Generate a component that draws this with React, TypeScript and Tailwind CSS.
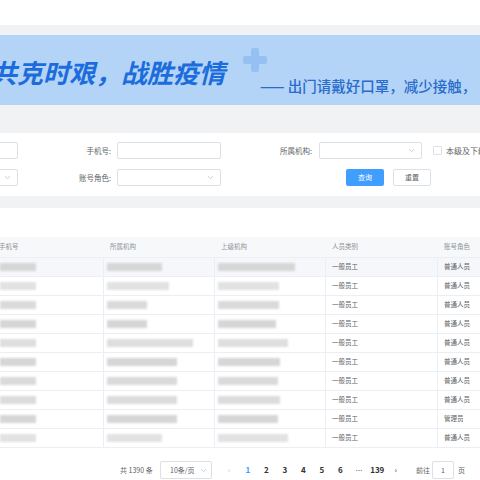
import React from "react";

const font = { fontFamily: '"Noto Sans CJK SC", "Noto Sans", sans-serif' };

const Chevron = ({ cls = "" }: { cls?: string }) => (
  <svg width="7" height="5" viewBox="0 0 7 5" className={cls}>
    <path d="M1 1.2 L3.5 3.6 L6 1.2" fill="none" stroke="#c0c4cc" strokeWidth="0.8" />
  </svg>
);

const rows = [
  { c1: 36, c2: 55, c3: 77, role: "普通人员", o: 1 },
  { c1: 36, c2: 62, c3: 61, role: "普通人员", o: 0.7 },
  { c1: 36, c2: 40, c3: 61, role: "普通人员", o: 0.9 },
  { c1: 36, c2: 40, c3: 58, role: "普通人员", o: 1 },
  { c1: 36, c2: 86, c3: 70, role: "普通人员", o: 0.8 },
  { c1: 36, c2: 70, c3: 62, role: "普通人员", o: 1 },
  { c1: 36, c2: 70, c3: 60, role: "普通人员", o: 0.9 },
  { c1: 36, c2: 70, c3: 62, role: "普通人员", o: 0.85 },
  { c1: 36, c2: 70, c3: 60, role: "管理员", o: 1 },
  { c1: 36, c2: 55, c3: 70, role: "普通人员", o: 0.7 },
];

const Bar = ({ w, o }: { w: number; o: number }) => (
  <div className="h-[8px] bg-[#d6d6d6] blur-[1.2px]" style={{ width: w, opacity: o }} />
);

export default function App() {
  return (
    <div className="w-[480px] h-[480px] overflow-hidden bg-white relative" style={font}>
      <div className="h-[25px] bg-white" />
      <div className="h-[10px] bg-[#f1f2f4]" />
      {/* banner */}
      <div className="h-[70px] bg-[#b3d4f7] relative flex items-start overflow-hidden">
        <div className="absolute left-[243px] top-[13px] w-[24px] h-[24px] opacity-80">
          <div className="absolute left-[8px] top-0 w-[8px] h-[24px] bg-[#8ebcf0] rounded-[2px]" />
          <div className="absolute left-0 top-[8px] w-[24px] h-[8px] bg-[#8ebcf0] rounded-[2px]" />
        </div>
        <div className="ml-[-9px] mt-[21px] h-[32px] leading-[32px] text-[26px] font-bold italic text-[#1c6ddb] whitespace-nowrap shrink-0">
          共克时艰，战胜疫情
        </div>
        <div className="ml-[35px] mt-[42px] h-[17px] leading-[17px] text-[14.5px] font-medium text-[#2a6ccb] whitespace-nowrap relative z-10 shrink-0">
          —— 出门请戴好口罩，减少接触，
        </div>
      </div>
      <div className="h-[28px] bg-[#f1f2f4]" />
      {/* filter panel */}
      <div className="h-[63px] bg-white pt-[9px] text-[7px] text-[#606266]">
        <div className="flex items-center h-[17px] ml-[-86px]">
          <div className="w-[104px] h-[17px] border border-[#dcdfe6] rounded-[2px] shrink-0" />
          <div className="w-[99px] text-right pr-[6px] whitespace-nowrap shrink-0 text-[7.5px]">手机号:</div>
          <div className="w-[104px] h-[17px] border border-[#dcdfe6] rounded-[2px] shrink-0" />
          <div className="w-[98px] text-right pr-[7px] whitespace-nowrap shrink-0 text-[7.5px]">所属机构:</div>
          <div className="w-[103px] h-[17px] border border-[#dcdfe6] rounded-[2px] flex items-center justify-end pr-[6px] shrink-0">
            <Chevron />
          </div>
          <div className="ml-[11px] w-[9px] h-[9px] border border-[#dcdfe6] rounded-[1px] shrink-0" />
          <div className="ml-[4px] whitespace-nowrap text-[8px] shrink-0">本级及下级</div>
        </div>
        <div className="flex items-center h-[17px] ml-[-86px] mt-[10px]">
          <div className="w-[104px] h-[17px] border border-[#dcdfe6] rounded-[2px] flex items-center justify-end pr-[6px] shrink-0">
            <Chevron />
          </div>
          <div className="w-[99px] text-right pr-[6px] whitespace-nowrap shrink-0 text-[7.5px]">账号角色:</div>
          <div className="w-[104px] h-[17px] border border-[#dcdfe6] rounded-[2px] flex items-center justify-end pr-[6px] shrink-0">
            <Chevron />
          </div>
          <div className="ml-[125px] w-[38px] h-[17px] rounded-[2px] bg-[#409eff] text-white flex items-center justify-center shrink-0">
            查询
          </div>
          <div className="ml-[9px] w-[38px] h-[17px] rounded-[2px] border border-[#dcdfe6] bg-white flex items-center justify-center shrink-0">
            重置
          </div>
        </div>
      </div>
      <div className="h-[12px] bg-[#f1f2f4]" />
      {/* table panel */}
      <div className="bg-white pt-[29px]">
        <div className="ml-[-7px] w-[560px] text-[6.5px]">
          <div className="flex h-[21px] items-center bg-[#f7f8fa] text-[#909399] border-b border-[#ebeef5]">
            <div className="w-[111px] pl-[6px]">手机号</div>
            <div className="w-[111px] pl-[6px]">所属机构</div>
            <div className="w-[111px] pl-[6px]">上级机构</div>
            <div className="w-[112px] pl-[6px]">人员类别</div>
            <div className="flex-1 pl-[6px]">账号角色</div>
          </div>
          {rows.map((r, i) => (
            <div
              key={i}
              className={`flex h-[19px] items-stretch text-[#606266] border-b border-[#ebeef5] ${i === 0 ? "bg-[#f5f7fa]" : "bg-white"}`}
            >
              <div className="w-[111px] pl-[7px] flex items-center border-r border-[#ebeef5]">
                <Bar w={r.c1} o={r.o} />
              </div>
              <div className="w-[111px] pl-[3px] flex items-center border-r border-[#ebeef5]">
                <Bar w={r.c2} o={r.o} />
              </div>
              <div className="w-[111px] pl-[3px] flex items-center border-r border-[#ebeef5]">
                <Bar w={r.c3} o={r.o} />
              </div>
              <div className="w-[112px] pl-[6px] flex items-center border-r border-[#ebeef5]">一般员工</div>
              <div className="flex-1 pl-[6px] flex items-center">{r.role}</div>
            </div>
          ))}
        </div>
        {/* pagination */}
        <div className="flex items-center h-[18px] mt-[13px] text-[#606266] text-[7px] whitespace-nowrap">
          <div className="ml-[120px] w-[40px] shrink-0">共 1390 条</div>
          <div className="w-[52px] h-[18px] border border-[#dcdfe6] rounded-[2px] flex items-center pl-[9px] pr-[4px] justify-between shrink-0">
            <span>10条/页</span>
            <Chevron />
          </div>
          <div className="ml-[8px] flex items-center text-[8px] font-semibold text-[#303133] shrink-0">
            <div className="w-[18.5px] text-center text-[#c0c4cc] font-normal">‹</div>
            <div className="w-[18.5px] text-center text-[#409eff]">1</div>
            <div className="w-[18.5px] text-center">2</div>
            <div className="w-[18.5px] text-center">3</div>
            <div className="w-[18.5px] text-center">4</div>
            <div className="w-[18.5px] text-center">5</div>
            <div className="w-[18.5px] text-center">6</div>
            <div className="w-[18.5px] text-center text-[7px] font-normal tracking-[-0.5px]">…</div>
            <div className="w-[18.5px] text-center">139</div>
            <div className="w-[18.5px] text-center font-normal">›</div>
          </div>
          <div className="ml-[11px] shrink-0">前往</div>
          <div className="ml-[2px] w-[22px] h-[18px] border border-[#dcdfe6] rounded-[2px] flex items-center justify-center shrink-0">1</div>
          <div className="ml-[4px] shrink-0">页</div>
        </div>
      </div>
    </div>
  );
}
